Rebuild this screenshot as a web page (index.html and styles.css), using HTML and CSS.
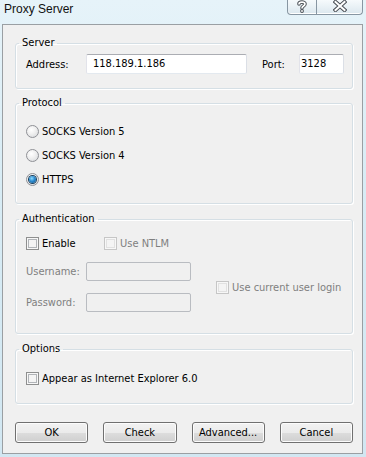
FILE: index.html
```html
<!DOCTYPE html>
<html>
<head>
<meta charset="utf-8">
<title>Proxy Server</title>
<link rel="stylesheet" href="styles.css">
</head>
<body>
<div class="window">
  <div class="titlebar">
    <span class="title">Proxy Server</span>
    <div class="caption-buttons">
      <div class="cbtn help">
        <svg width="12" height="13" viewBox="0 0 12 13">
          <path d="M3 4 C3 1.5 9 1.5 9 4 C9 6 6 6 6 8" fill="none" stroke="#4a4f55" stroke-width="3.6" stroke-linecap="round"/>
          <circle cx="6" cy="11" r="1.9" fill="#4a4f55"/>
          <path d="M3 4 C3 1.5 9 1.5 9 4 C9 6 6 6 6 8" fill="none" stroke="#fff" stroke-width="1.6" stroke-linecap="round"/>
          <circle cx="6" cy="11" r="0.9" fill="#fff"/>
        </svg>
      </div>
      <div class="cbtn close">
        <svg width="14" height="12" viewBox="0 0 14 12">
          <path d="M2.5 2 L11.5 10 M11.5 2 L2.5 10" stroke="#4a4f55" stroke-width="4" stroke-linecap="square"/>
          <path d="M2.5 2 L11.5 10 M11.5 2 L2.5 10" stroke="#fff" stroke-width="2" stroke-linecap="square"/>
        </svg>
      </div>
    </div>
  </div>

  <div class="client">
    <fieldset class="group g-server">
      <legend>Server</legend>
      <div class="server-row">
        <span class="lbl">Address:</span>
        <div class="input addr">118.189.1.186</div>
        <span class="lbl port-lbl">Port:</span>
        <div class="input port">3128</div>
      </div>
    </fieldset>

    <fieldset class="group g-protocol">
      <legend>Protocol</legend>
      <div class="opt"><span class="radio"></span><span>SOCKS Version 5</span></div>
      <div class="opt"><span class="radio"></span><span>SOCKS Version 4</span></div>
      <div class="opt"><span class="radio checked"></span><span>HTTPS</span></div>
    </fieldset>

    <fieldset class="group g-auth">
      <legend>Authentication</legend>
      <div class="auth-top">
        <div class="opt enable"><span class="check"></span><span>Enable</span></div>
        <div class="opt disabled"><span class="check dis"></span><span>Use NTLM</span></div>
      </div>
      <div class="auth-fields">
        <div class="cred">
          <div class="cred-row"><span class="lbl disabled">Username:</span><div class="input dis-input"></div></div>
          <div class="cred-row"><span class="lbl disabled">Password:</span><div class="input dis-input"></div></div>
        </div>
        <div class="opt disabled current"><span class="check dis"></span><span>Use current user login</span></div>
      </div>
    </fieldset>

    <fieldset class="group g-options">
      <legend>Options</legend>
      <div class="opt"><span class="check"></span><span>Appear as Internet Explorer 6.0</span></div>
    </fieldset>

    <div class="buttons">
      <button class="btn">OK</button>
      <button class="btn">Check</button>
      <button class="btn">Advanced...</button>
      <button class="btn">Cancel</button>
    </div>
  </div>
</div>
</body>
</html>
```
FILE: styles.css
```css
html, body {
  margin: 0;
  padding: 0;
}
body {
  width: 366px;
  height: 457px;
  overflow: hidden;
  background: linear-gradient(180deg, #e6f3f9 0%, #d8ecf5 40%, #d2e7f2 100%);
  font-family: "DejaVu Sans Condensed", "DejaVu Sans", sans-serif;
  font-size: 11px;
  color: #000;
}
.window {
  display: flex;
  flex-direction: column;
  height: 457px;
}
.titlebar {
  height: 24px;
  display: flex;
  justify-content: space-between;
  align-items: flex-start;
}
.title {
  font-family: "Liberation Sans", sans-serif;
  font-size: 12px;
  line-height: 16px;
  margin: 1px 0 0 4px;
  color: #111;
}
.caption-buttons {
  display: flex;
  margin-right: 3px;
  border: 1px solid #8796a2;
  border-top: none;
  border-radius: 0 0 4px 4px;
  background: linear-gradient(180deg, #f6fafc 0%, #e6eff4 60%, #dbe7ee 100%);
  box-shadow: inset 0 -1px 0 #fff;
}
.cbtn {
  height: 14px;
  display: flex;
  align-items: flex-start;
  justify-content: center;
}
.cbtn.help {
  width: 28px;
  border-right: 1px solid #8796a2;
}
.cbtn.close {
  width: 45px;
}
.client {
  margin: 0 3px 3px 2px;
  border: 1px solid #9a9fa3;
  background: #f0f0f0;
  padding: 11px 9px 10px 12px;
  flex: 1;
}
.group {
  margin: 0;
  padding: 0;
  border: 1px solid #d5dfe5;
  border-radius: 3px;
  box-shadow: inset 1px 1px 0 #fff, 1px 1px 0 #fff;
  min-width: 0;
}
.group legend {
  margin-left: -7px;
  padding: 0 3px;
  line-height: 14px;
}
.g-server { padding: 4px 8px 14px 10px; }
.g-protocol { margin-top: 7px; padding: 13px 8px 16px 10px; }
.g-auth { margin-top: 8px; padding: 9px 8px 21px 10px; }
.g-options { margin-top: 8px; padding: 14px 8px 17px 10px; }

.server-row {
  display: flex;
  align-items: center;
}
.lbl {
  width: 60px;
  flex: none;
}
.port-lbl {
  margin-left: 15px;
  width: 37px;
}
.input {
  box-sizing: border-box;
  height: 20px;
  line-height: 18px;
  background: #fff;
  border: 1px solid #abadb3;
  border-top-color: #abadb3;
  border-left-color: #e2e3ea;
  border-right-color: #dbdfe6;
  border-bottom-color: #e3e9ef;
  border-radius: 2px;
  padding: 0 6px;
}
.input.addr { width: 161px; }
.input.port { width: 45px; padding-left: 1px; }

.opt {
  display: flex;
  align-items: center;
  height: 16px;
  gap: 3px;
}
.g-protocol .opt + .opt { margin-top: 8px; }

.radio {
  box-sizing: border-box;
  width: 13px;
  height: 13px;
  border-radius: 50%;
  border: 1px solid #8f9196;
  background: radial-gradient(circle at 40% 35%, #ffffff 0%, #f1f1f1 40%, #d4d6d9 100%);
  flex: none;
  display: flex;
  align-items: center;
  justify-content: center;
}
.radio.checked::after {
  content: "";
  width: 7px;
  height: 7px;
  border-radius: 50%;
  background: radial-gradient(circle at 40% 35%, #8fdcff 0%, #2b8bd0 45%, #0d4f82 100%);
  box-shadow: 0 0 0 1px #1a3f5c;
}
.check {
  box-sizing: border-box;
  width: 13px;
  height: 13px;
  border: 1px solid #8e8f8f;
  background: #f4f4f4;
  box-shadow: inset 0 0 0 1px #f7f7f7, inset 0 0 0 2px #b1b4b8;
  flex: none;
}
.check.dis {
  border-color: #c6c6c6;
  box-shadow: inset 0 0 0 1px #f7f7f7, inset 0 0 0 2px #e1e1e1;
  background: #f4f4f4;
}
.disabled {
  color: #7f7f7f;
}
.auth-top {
  display: flex;
}
.auth-top .enable {
  width: 78px;
}
.auth-fields {
  display: flex;
  align-items: center;
  margin-top: 11px;
}
.cred {
  display: flex;
  flex-direction: column;
  gap: 12px;
}
.cred-row {
  display: flex;
  align-items: center;
}
.input.dis-input {
  width: 105px;
  height: 19px;
  background: #f0f0f0;
  border: 1px solid #b9bcc1;
  border-radius: 2px;
}
.current {
  margin-left: 25px;
}
.buttons {
  display: grid;
  grid-template-columns: repeat(4, 1fr);
  column-gap: 15px;
  margin-top: 18px;
}
.btn {
  height: 21px;
  margin: 0;
  padding: 0;
  font: inherit;
  color: #000;
  border: 1px solid #707070;
  border-radius: 3px;
  background: linear-gradient(180deg, #f2f2f2 0%, #ebebeb 50%, #dddddd 51%, #cfcfcf 100%);
  box-shadow: inset 0 0 0 1px #fcfcfc;
}
```
